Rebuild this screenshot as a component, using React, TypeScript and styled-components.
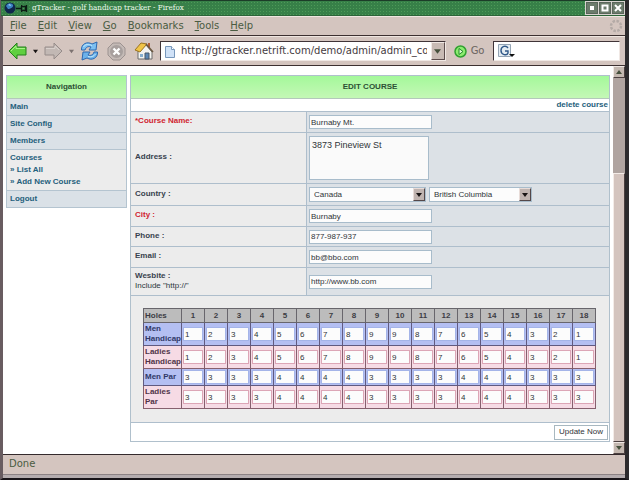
import React from "react";
import styled, { createGlobalStyle, css } from "styled-components";

const Global = createGlobalStyle`
  *, *::before, *::after { box-sizing: border-box; }
  html, body, #root { height: 100%; }
  body {
    margin: 0;
    background: #181418;
    color: #303840;
    font: 8px/10px "Liberation Sans", Arial, sans-serif;
  }
  button, input, select, textarea { font: inherit; color: #303438; margin: 0; border-radius: 0; }
`;

const chromeFont = css`
  font: 10px/12px "DejaVu Sans", Verdana, sans-serif;
  color: #4a5c42;
`;

const Window = styled.div`
  min-height: 100%;
  display: flex;
  flex-direction: column;
  background: #d4c5bf;
  border-left: 3px solid #685c60;
  border-right: 4px solid #2c2a2c;
  border-bottom: 2px solid #181418;
`;

const TitleBar = styled.header`
  display: flex;
  align-items: center;
  gap: 4px;
  height: 16px;
  flex: none;
  margin-left: -2px;
  padding-left: 3px;
  border-top: 1px solid #1c3c28;
  border-bottom: 1px solid #2c6438;
  background-color: #378048;
  background-image: radial-gradient(circle, #4d9a58 35%, transparent 40%);
  background-size: 3px 3px;
`;

const TitleIcon = styled.svg`
  width: 24px;
  height: 14px;
  flex: none;
`;

const Title = styled.h1`
  flex: 1;
  margin: 0;
  font: 8px/12px "DejaVu Serif Condensed", "DejaVu Serif", serif;
  color: #eefaec;
`;

const TitleText = styled.span`
  background: #38804a;
  padding-right: 4px;
`;

const WindowControls = styled.div`
  display: flex;
  align-items: center;
  gap: 1px;
  height: 14px;
  padding: 1px;
  background: #d8d4d0;
`;

const WindowButton = styled.button`
  width: 12px;
  height: 12px;
  padding: 0;
  display: grid;
  place-items: center;
  border: 1px solid #5a665a;
  background: #6c7c6c;
`;

const MenuBar = styled.nav`
  ${chromeFont}
  display: flex;
  align-items: center;
  gap: 11px;
  height: 20px;
  flex: none;
  padding: 0 2px 0 7px;
  border-top: 1px solid #efe6e0;
  border-bottom: 1px solid #3c3030;
`;

const MenuItem = styled.button`
  ${chromeFont}
  padding: 0;
  border: 0;
  background: none;
`;

const Throbber = styled.svg`
  width: 14px;
  height: 14px;
  margin-left: auto;
`;

const ToolBar = styled.div`
  ${chromeFont}
  display: flex;
  align-items: center;
  height: 30px;
  flex: none;
  padding: 0 5px;
  border-top: 1px solid #efe6e0;
  border-bottom: 1px solid #3c3030;
`;

const ToolButton = styled.button<{ $before?: number; $after?: number }>`
  ${chromeFont}
  display: flex;
  align-items: center;
  gap: 4px;
  padding: 0;
  margin-left: ${(p) => p.$before ?? 0}px;
  margin-right: ${(p) => p.$after ?? 8}px;
  border: 0;
  background: none;
  color: #6b6460;
  flex: none;
  svg { display: block; }
`;

const Field = styled.div<{ $grow: number }>`
  display: flex;
  align-items: center;
  flex: ${(p) => p.$grow} 1 0;
  min-width: 0;
  height: 20px;
  padding-left: 4px;
  border: 1px solid #403438;
  border-right-color: #f0e8e4;
  border-bottom-color: #f0e8e4;
  background: #fff;
  svg { flex: none; display: block; }
`;

const FieldInput = styled.input`
  ${chromeFont}
  flex: 1;
  min-width: 0;
  width: 0;
  padding: 0;
  margin-left: 6px;
  border: 0;
  outline: 0;
  background: transparent;
  color: #443a3e;
`;

const DropButton = styled.button`
  width: 14px;
  align-self: stretch;
  padding: 0;
  margin-left: 4px;
  display: grid;
  place-items: center;
  border: 1px solid #f0e8e4;
  border-right-color: #5c4c4c;
  border-bottom-color: #5c4c4c;
  background: #c8bab4;
`;

const Viewport = styled.div`
  flex: 1;
  display: flex;
  background: #fff;
  border-bottom: 1px solid #342a2c;
`;

const Page = styled.div`
  flex: 1;
  min-width: 0;
  display: flex;
  align-items: flex-start;
  gap: 3px;
  padding: 9px 3px 12px;
`;

const ScrollBar = styled.div`
  width: 12px;
  display: flex;
  flex-direction: column;
  background: #b0a4a0;
`;

const ScrollButton = styled.button`
  height: 12px;
  flex: none;
  padding: 0;
  display: grid;
  place-items: center;
  border: 1px solid #f0e8e4;
  border-right-color: #4c4040;
  border-bottom-color: #4c4040;
  background: #c4b8b0;
`;

const Track = styled.div`
  flex: 1;
  display: flex;
  flex-direction: column;
  justify-content: flex-end;
`;

const Thumb = styled.div`
  height: 74%;
  border: 1px solid #f4ece8;
  border-right-color: #4c4040;
  border-bottom-color: #4c4040;
  background: #d4c4be;
`;

const StatusBar = styled.footer`
  ${chromeFont}
  height: 19px;
  flex: none;
  padding: 3px 6px;
`;

const Frame = styled.div`
  height: 4px;
  flex: none;
  border-top: 1px solid #8c8284;
  background: #b4acae;
`;

const PanelTitle = styled.h2`
  display: grid;
  place-items: center;
  height: 23px;
  margin: 0;
  border-bottom: 1px solid #b4c8bc;
  background: linear-gradient(#a4f89a, #c4f8b6);
  font-size: 8px;
  line-height: 10px;
  font-weight: bold;
  color: #2c5034;
`;

const Sidebar = styled.aside`
  width: 121px;
  flex: none;
  border: 1px solid #b4c4d0;
  border-bottom: 0;
`;

const NavLink = styled.a`
  display: block;
  color: #24607c;
  font-weight: bold;
  text-decoration: none;
`;

const NavSection = styled.div<{ $open?: boolean }>`
  display: flex;
  flex-direction: column;
  gap: ${(p) => (p.$open ? 2 : 0)}px;
  padding: 3px;
  border-bottom: 1px solid #b4c4d0;
  background: ${(p) => (p.$open ? "#ececec" : "#dae1e7")};
`;

const Panel = styled.form`
  flex: 1;
  min-width: 0;
  border: 1px solid #b0c0cc;
`;

const PanelBar = styled.div<{ $tall?: boolean }>`
  display: flex;
  justify-content: flex-end;
  align-items: center;
  height: ${(p) => (p.$tall ? 18 : 12)}px;
  padding-right: 1px;
`;

const FormRow = styled.div<{ $height: number }>`
  display: grid;
  grid-template-columns: 175fr 303fr;
  min-height: ${(p) => p.$height}px;
  border-top: 1px solid #aebecc;
`;

const LabelCell = styled.div<{ $required?: boolean }>`
  display: flex;
  flex-direction: column;
  justify-content: center;
  padding: 0 4px 2px;
  background: #ececec;
  color: ${(p) => (p.$required ? "#d02430" : "#38424e")};
  label { font-weight: bold; }
`;

const Hint = styled.small`
  font-size: 8px;
  color: #2c3840;
`;

const ValueCell = styled.div`
  display: flex;
  align-items: center;
  gap: 3px;
  padding: 0 2px;
  border-left: 1px solid #aebecc;
  background: #dce1e6;
`;

const TextInput = styled.input`
  width: 123px;
  height: 14px;
  padding: 0 1px;
  border: 1px solid #a8bccb;
  background: #fcfcfc;
`;

const TextArea = styled.textarea`
  display: block;
  width: 120px;
  height: 44px;
  padding: 3px 2px;
  border: 1px solid #a8bccb;
  background: #fafafa;
  font-size: 9px;
  line-height: 11px;
  resize: none;
  overflow: hidden;
`;

const SelectBox = styled.div<{ $width: number }>`
  position: relative;
  width: ${(p) => p.$width}px;
  height: 15px;
  select {
    appearance: none;
    width: 100%;
    height: 100%;
    padding: 0 12px 0 4px;
    border: 1px solid #a8bccb;
    background: #fcfcfc;
  }
`;

const SelectArrow = styled.span`
  position: absolute;
  top: 1px;
  right: 1px;
  bottom: 1px;
  width: 12px;
  display: grid;
  place-items: center;
  pointer-events: none;
  border: 1px solid #e8dcd8;
  border-right-color: #54484a;
  border-bottom-color: #54484a;
  background: #c0b4b0;
`;

const Scorecard = styled.div`
  padding: 12px 13px 13px 12px;
  border-top: 1px solid #aebecc;
  border-bottom: 1px solid #aebecc;
  background: #ececec;
`;

const ScoreTable = styled.table`
  width: 100%;
  table-layout: fixed;
  border-collapse: collapse;
`;

const HeadCell = styled.th<{ $first?: boolean }>`
  width: ${(p) => (p.$first ? "38px" : "auto")};
  height: 14px;
  padding: 0 1px;
  border: 1px solid #68666c;
  background: #bcbcbc;
  text-align: ${(p) => (p.$first ? "left" : "center")};
  color: #3c3c44;
`;

const ScoreRow = styled.tr<{ $ladies: boolean; $height: number }>`
  height: ${(p) => p.$height}px;
  background: ${(p) => (p.$ladies ? "#f6dbe5" : "#b4bff2")};
  th, td { border: 1px solid ${(p) => (p.$ladies ? "#86606e" : "#605a80")}; }
  th {
    padding: 0 1px;
    text-align: left;
    color: ${(p) => (p.$ladies ? "#503448" : "#303868")};
  }
  td { padding: 0 0 0 1px; }
  input { border-color: ${(p) => (p.$ladies ? "#dca6b6" : "#a4b4e8")}; }
`;

const ScoreInput = styled.input`
  display: block;
  width: 20px;
  max-width: 100%;
  height: 14px;
  padding: 0 1px;
  border: 1px solid;
  background: #fcfcfc;
`;

const SubmitButton = styled.button`
  height: 15px;
  padding: 0 4px;
  border: 1px solid #a8b8c0;
  background: #fff;
`;

const Caret = ({ up = false, size = 6, color = "#46503c" }: { up?: boolean; size?: number; color?: string }) => (
  <svg width={size} height={size} viewBox="0 0 6 6" aria-hidden="true">
    <path d={up ? "M0 5h6L3 1z" : "M0 1h6L3 5z"} fill={color} />
  </svg>
);

const Arrow = ({ forward = false }: { forward?: boolean }) => (
  <svg width="19" height="18" viewBox="0 0 19 18" aria-hidden="true">
    <path
      d={forward ? "M18 9 10 1v4H1v8h9v4z" : "M1 9l8-8v4h9v8H9v4z"}
      fill={forward ? "#c2b8b4" : "#5fcf40"}
      stroke={forward ? "#968c8a" : "#24801c"}
      strokeLinejoin="round"
    />
    <path d={forward ? "M2 6.500h9V4l4 4" : "M3 9l5-5v2.500h9"} fill="none" stroke={forward ? "#d8d0cc" : "#a8f288"} />
  </svg>
);

const ReloadIcon = () => (
  <svg width="19" height="20" viewBox="0 0 19 20" aria-hidden="true">
    <path d="M1.500 9C1 3 7 0 12 3l5-2-1 8H9l2-3C8 5 6 6 5 9z" fill="#7cc0f2" stroke="#2c68b0" strokeLinejoin="round" />
    <path d="M17.500 11c.5 6-5.500 9-10.500 6l-5 2 1-8h7l-2 3c3 1 5 0 6-3z" fill="#6cb2ea" stroke="#2c68b0" strokeLinejoin="round" />
    <path d="M3.500 6C5 3 9 3 12 4.500M8 15.500c3 1 6 0 7.500-2.500" fill="none" stroke="#c4eafc" />
  </svg>
);

const StopIcon = () => (
  <svg width="19" height="19" viewBox="0 0 19 19" aria-hidden="true">
    <path d="M6 1h7l5 5v7l-5 5H6l-5-5V6z" fill="#c4bab6" stroke="#9c9290" />
    <circle cx="9.500" cy="9.500" r="6.500" fill="#a8a09e" />
    <path d="M6.500 6.500l6 6m0-6l-6 6" stroke="#fff" strokeWidth="2.300" />
  </svg>
);

const HomeIcon = () => (
  <svg width="20" height="20" viewBox="0 0 20 20" aria-hidden="true">
    <path d="M4 10l8-6 6 7v7H4z" fill="#f4f4f0" stroke="#6c6c6c" />
    <path d="M15 2v5" stroke="#b06038" strokeWidth="2" />
    <path d="M1 9l6-7 6 1-7 8z" fill="#f0c448" stroke="#9c7420" strokeLinejoin="round" />
    <path d="M12 3l7 8" stroke="#6c5840" strokeWidth="1.500" />
    <path d="M11 18v-6h4v6z" fill="#5c88b4" stroke="#485868" />
    <path d="M6 13h3v3H6z" fill="#88aecc" />
  </svg>
);

const PageIcon = () => (
  <svg width="10" height="13" viewBox="0 0 10 13" aria-hidden="true">
    <path d="M.5 1.500h6l3 3v8h-9z" fill="#d0e2f8" stroke="#7898bc" />
    <path d="M6.500 1.500v3h3" fill="#fff" stroke="#7898bc" />
  </svg>
);

const GoIcon = () => (
  <svg width="13" height="13" viewBox="0 0 13 13" aria-hidden="true">
    <circle cx="6.500" cy="6.500" r="5.500" fill="#8cec70" stroke="#30a030" strokeWidth="1.500" />
    <path d="M5 3.500l4 3-4 3z" fill="#e0ffd4" stroke="#208828" />
  </svg>
);

const SearchEngineIcon = () => (
  <svg width="18" height="15" viewBox="0 0 18 15" aria-hidden="true">
    <path d="M.5.5h12v12H.5z" fill="#e4ecf2" stroke="#94a4b4" />
    <path d="M10 4C8 1 3 2 3 6.500S9 12 10 9V7H7" fill="none" stroke="#305888" strokeWidth="1.400" />
    <path d="M11 10h6l-3 3z" fill="#101010" />
  </svg>
);

const menus = ["File", "Edit", "View", "Go", "Bookmarks", "Tools", "Help"];

const handicaps = [1, 2, 3, 4, 5, 6, 7, 8, 9, 9, 8, 7, 6, 5, 4, 3, 2, 1];
const pars = [3, 3, 3, 3, 4, 4, 4, 4, 3, 3, 3, 3, 4, 4, 4, 3, 3, 3];
const scoreRows = [
  { label: "Men Handicap", values: handicaps, ladies: false, height: 23 },
  { label: "Ladies Handicap", values: handicaps, ladies: true, height: 23 },
  { label: "Men Par", values: pars, ladies: false, height: 17 },
  { label: "Ladies Par", values: pars, ladies: true, height: 23 },
];

type RowProps = {
  id: string;
  label: string;
  height: number;
  required?: boolean;
  hint?: string;
  children: React.ReactNode;
};

const Row = ({ id, label, height, required, hint, children }: RowProps) => (
  <FormRow $height={height}>
    <LabelCell $required={required}>
      <label htmlFor={id}>{label}</label>
      {hint && <Hint>{hint}</Hint>}
    </LabelCell>
    <ValueCell>{children}</ValueCell>
  </FormRow>
);

const Dropdown = ({ id, width, value, label }: { id: string; width: number; value: string; label?: string }) => (
  <SelectBox $width={width}>
    <select id={id} aria-label={label} defaultValue={value}>
      <option>{value}</option>
    </select>
    <SelectArrow>
      <Caret color="#181414" />
    </SelectArrow>
  </SelectBox>
);

export default function App() {
  return (
    <>
      <Global />
      <Window>
        <TitleBar>
          <TitleIcon viewBox="0 0 24 14" aria-hidden="true">
            <circle cx="6" cy="7" r="5.500" fill="#10264c" />
            <path d="M2 5c2-4 6-3 7-1S6 8 4 8z" fill="#3c84c4" />
            <path d="M4 4l2-1 1 2z" fill="#a8d8f4" />
            <path d="M12 7.500h5M17.500 4v7M17.500 5.500h4v4h-4M22.500 4v7" fill="none" stroke="#0c1c14" strokeWidth="1.300" />
          </TitleIcon>
          <Title>
            <TitleText>gTracker - golf handicap tracker - Firefox</TitleText>
          </Title>
          <WindowControls>
            <WindowButton aria-label="Minimize">
              <svg width="8" height="8" viewBox="0 0 8 8"><path d="M2 2h4v4H2z" fill="#fff" /></svg>
            </WindowButton>
            <WindowButton aria-label="Maximize">
              <svg width="8" height="8" viewBox="0 0 8 8"><path d="M1.500 1.500h5v5h-5z" fill="none" stroke="#fff" strokeWidth="2" /></svg>
            </WindowButton>
            <WindowButton aria-label="Close">
              <svg width="8" height="8" viewBox="0 0 8 8"><path d="M1 1l6 6m0-6L1 7" stroke="#fff" strokeWidth="2" /></svg>
            </WindowButton>
          </WindowControls>
        </TitleBar>

        <MenuBar>
          {menus.map((m) => (
            <MenuItem key={m}>
              <u>{m[0]}</u>
              {m.slice(1)}
            </MenuItem>
          ))}
          <Throbber viewBox="0 0 14 14" aria-hidden="true">
            <circle cx="7" cy="7" r="5" fill="none" stroke="#b4aaa6" strokeWidth="2.500" strokeDasharray="2.500 1.400" />
          </Throbber>
        </MenuBar>

        <ToolBar>
          <ToolButton $after={6} aria-label="Back">
            <Arrow />
          </ToolButton>
          <ToolButton $after={6} aria-label="Back history">
            <Caret size={5} color="#181414" />
          </ToolButton>
          <ToolButton $after={6} aria-label="Forward">
            <Arrow forward />
          </ToolButton>
          <ToolButton $after={6} aria-label="Forward history">
            <Caret size={5} color="#7c7270" />
          </ToolButton>
          <ToolButton aria-label="Reload">
            <ReloadIcon />
          </ToolButton>
          <ToolButton aria-label="Stop">
            <StopIcon />
          </ToolButton>
          <ToolButton $after={6} aria-label="Home">
            <HomeIcon />
          </ToolButton>
          <Field $grow={290}>
            <PageIcon />
            <FieldInput aria-label="Address" defaultValue="http://gtracker.netrift.com/demo/admin/admin_course.php" />
            <DropButton aria-label="Show addresses">
              <Caret size={7} />
            </DropButton>
          </Field>
          <ToolButton $before={8} $after={8}>
            <GoIcon />
            Go
          </ToolButton>
          <Field $grow={126}>
            <SearchEngineIcon />
            <FieldInput aria-label="Search" />
          </Field>
        </ToolBar>

        <Viewport>
          <Page>
            <Sidebar>
              <PanelTitle>Navigation</PanelTitle>
              <NavSection><NavLink href="#main">Main</NavLink></NavSection>
              <NavSection><NavLink href="#config">Site Config</NavLink></NavSection>
              <NavSection><NavLink href="#members">Members</NavLink></NavSection>
              <NavSection $open>
                <NavLink href="#courses">Courses</NavLink>
                <NavLink href="#list">» List All</NavLink>
                <NavLink href="#add">» Add New Course</NavLink>
              </NavSection>
              <NavSection><NavLink href="#logout">Logout</NavLink></NavSection>
            </Sidebar>

            <Panel onSubmit={(e) => e.preventDefault()}>
              <PanelTitle>EDIT COURSE</PanelTitle>
              <PanelBar>
                <NavLink href="#delete">delete course</NavLink>
              </PanelBar>
              <Row id="name" label="*Course Name:" height={21} required>
                <TextInput id="name" defaultValue="Burnaby Mt." />
              </Row>
              <Row id="address" label="Address :" height={51}>
                <TextArea id="address" defaultValue="3873 Pineview St" />
              </Row>
              <Row id="country" label="Country :" height={22}>
                <Dropdown id="country" width={117} value="Canada" />
                <Dropdown id="province" width={103} value="British Columbia" label="Province" />
              </Row>
              <Row id="city" label="City :" height={21} required>
                <TextInput id="city" defaultValue="Burnaby" />
              </Row>
              <Row id="phone" label="Phone :" height={20}>
                <TextInput id="phone" defaultValue="877-987-937" />
              </Row>
              <Row id="email" label="Email :" height={21}>
                <TextInput id="email" defaultValue="bb@bbo.com" />
              </Row>
              <Row id="website" label="Wesbite :" height={28} hint={'Include "http://"'}>
                <TextInput id="website" defaultValue="http://www.bb.com" />
              </Row>
              <Scorecard>
                <ScoreTable>
                  <thead>
                    <tr>
                      <HeadCell $first scope="col">Holes</HeadCell>
                      {handicaps.map((_, i) => (
                        <HeadCell key={i} scope="col">{i + 1}</HeadCell>
                      ))}
                    </tr>
                  </thead>
                  <tbody>
                    {scoreRows.map((r) => (
                      <ScoreRow key={r.label} $ladies={r.ladies} $height={r.height}>
                        <th scope="row">{r.label}</th>
                        {r.values.map((v, i) => (
                          <td key={i}>
                            <ScoreInput aria-label={`${r.label}, hole ${i + 1}`} defaultValue={v} />
                          </td>
                        ))}
                      </ScoreRow>
                    ))}
                  </tbody>
                </ScoreTable>
              </Scorecard>
              <PanelBar $tall>
                <SubmitButton type="submit">Update Now</SubmitButton>
              </PanelBar>
            </Panel>
          </Page>
          <ScrollBar>
            <ScrollButton aria-label="Scroll up"><Caret up /></ScrollButton>
            <Track><Thumb /></Track>
            <ScrollButton aria-label="Scroll down"><Caret /></ScrollButton>
          </ScrollBar>
        </Viewport>
        <StatusBar>Done</StatusBar>
        <Frame />
      </Window>
    </>
  );
}
